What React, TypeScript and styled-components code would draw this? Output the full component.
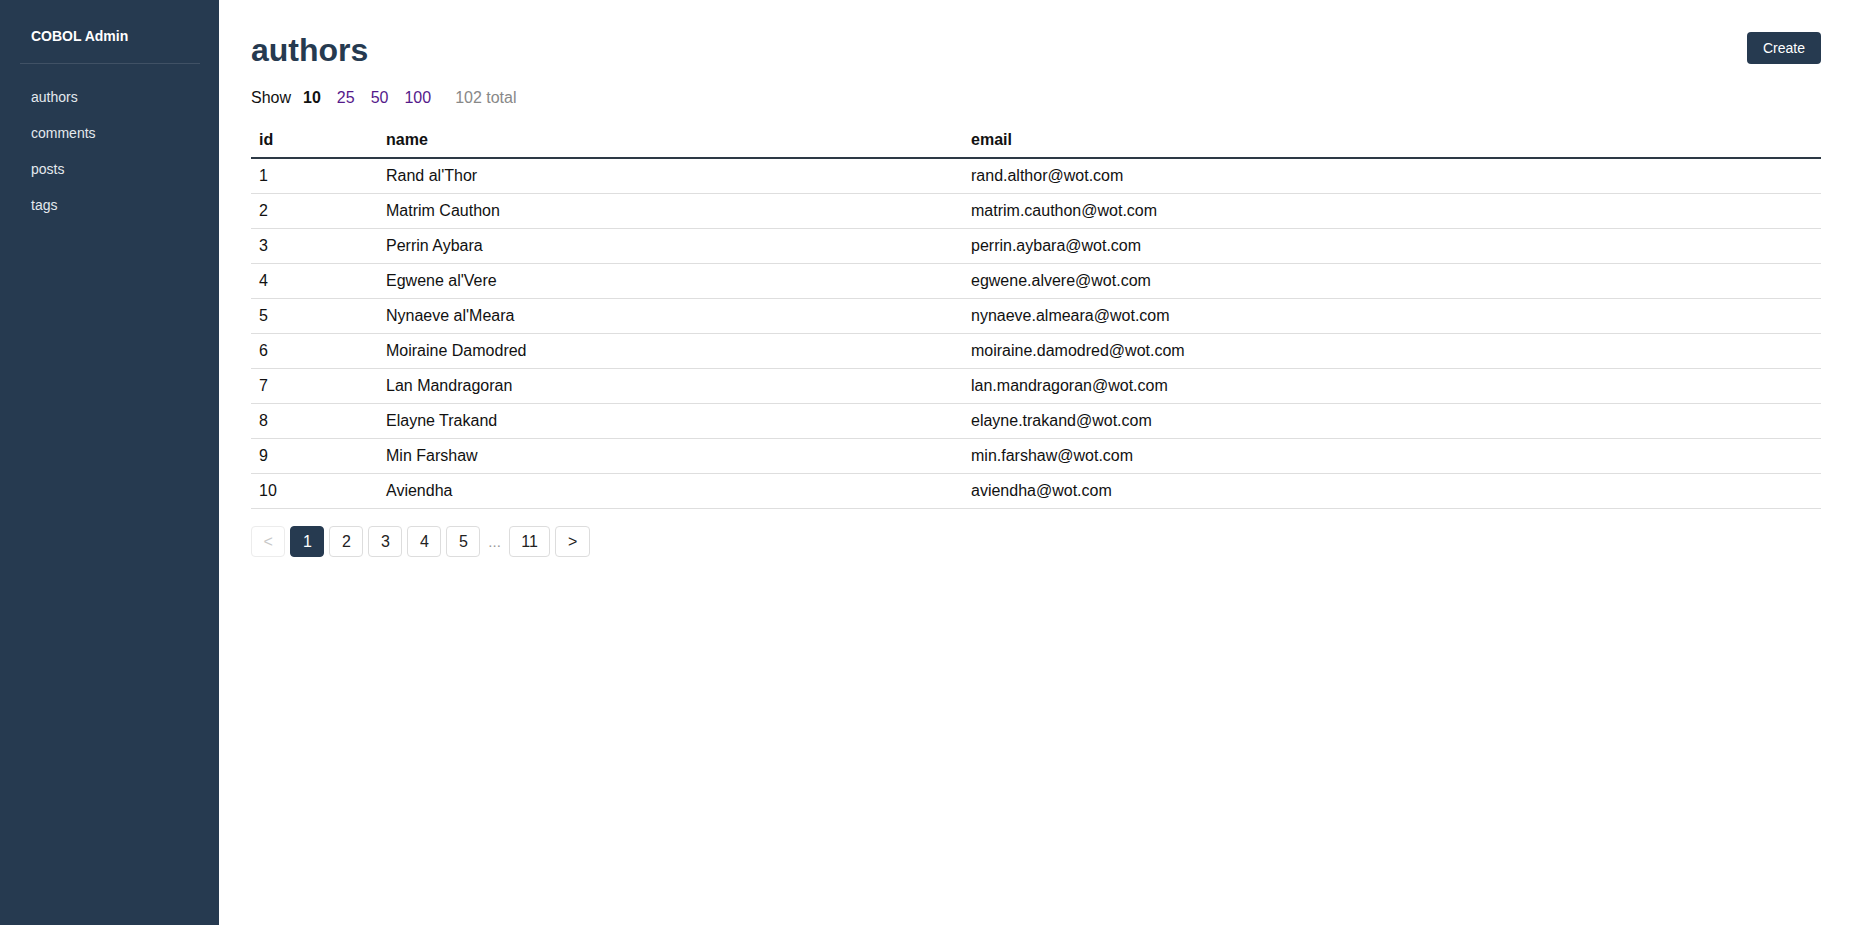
import React from "react";
import styled, { createGlobalStyle } from "styled-components";

const Global = createGlobalStyle`
  html, body { margin: 0; padding: 0; height: 100%; background: #fff; }
  body { font-family: "Liberation Sans", Arial, sans-serif; color: #111; }
  #root { height: 100%; }
  * { box-sizing: border-box; }
`;

const Layout = styled.div`
  display: flex;
  min-height: 100vh;
`;

const Sidebar = styled.aside`
  width: 219px;
  flex: 0 0 219px;
  background: #263a50;
  padding-top: 19px;
`;

const Brand = styled.div`
  margin: 0 19px 0 20px;
  padding: 9px 11px 19px;
  font-size: 14px;
  line-height: 16px;
  font-weight: bold;
  color: #fff;
  border-bottom: 1px solid rgba(255, 255, 255, 0.12);
`;

const Nav = styled.nav`
  display: flex;
  flex-direction: column;
  margin: 15px 19px 0 20px;
`;

const NavItem = styled.a`
  display: block;
  padding: 10px 11px;
  font-size: 14px;
  line-height: 16px;
  color: #e4e9ee;
  text-decoration: none;
`;

const Main = styled.main`
  flex: 1;
  padding: 32px;
  min-width: 0;
`;

const Header = styled.div`
  display: flex;
  justify-content: space-between;
  align-items: flex-start;
  margin-bottom: 20px;
`;

const Title = styled.h1`
  margin: 0;
  font-size: 32px;
  line-height: 37px;
  font-weight: bold;
  color: #263a50;
`;

const CreateButton = styled.button`
  height: 32px;
  padding: 0 16px;
  border: none;
  border-radius: 4px;
  background: #263a50;
  color: #fff;
  font-family: inherit;
  font-size: 14px;
  cursor: pointer;
`;

const ShowRow = styled.div`
  display: flex;
  align-items: baseline;
  font-size: 16px;
  line-height: 18px;
  margin-bottom: 16px;
`;

const ShowLabel = styled.span`
  color: #111;
  margin-right: 12px;
`;

const SizeLinks = styled.div`
  display: flex;
  gap: 16px;
`;

const SizeLink = styled.a<{ $active?: boolean }>`
  color: ${(p) => (p.$active ? "#111" : "#551a8b")};
  font-weight: ${(p) => (p.$active ? "bold" : "normal")};
  text-decoration: none;
`;

const Total = styled.span`
  margin-left: 24px;
  color: #888;
`;

const Table = styled.table`
  width: 100%;
  border-collapse: collapse;
  font-size: 16px;
  line-height: 18px;
`;

const Th = styled.th<{ $w?: string }>`
  text-align: left;
  padding: 8px;
  font-weight: bold;
  color: #111;
  border-bottom: 2px solid #2d3945;
  width: ${(p) => p.$w || "auto"};
`;

const Td = styled.td`
  padding: 8px;
  color: #111;
  border-bottom: 1px solid #dedede;
`;

const Pager = styled.div`
  display: flex;
  align-items: center;
  gap: 5px;
  margin-top: 17px;
`;

const PageButton = styled.button<{ $active?: boolean }>`
  min-width: 34px;
  height: 31px;
  padding: 0 11.5px;
  border-radius: 4px;
  border: 1px solid ${(p) => (p.$active ? "#263a50" : "#ddd")};
  background: ${(p) => (p.$active ? "#263a50" : "#fff")};
  color: ${(p) => (p.$active ? "#fff" : "#222")};
  font-family: inherit;
  font-size: 16px;
  cursor: pointer;
  &:disabled {
    color: #c8c8c8;
    border-color: #ececec;
    cursor: default;
  }
`;

const Ellipsis = styled.span`
  padding: 0 3px;
  color: #999;
  font-size: 15px;
`;

const authors = [
  ["Rand al'Thor", "rand.althor@wot.com"],
  ["Matrim Cauthon", "matrim.cauthon@wot.com"],
  ["Perrin Aybara", "perrin.aybara@wot.com"],
  ["Egwene al'Vere", "egwene.alvere@wot.com"],
  ["Nynaeve al'Meara", "nynaeve.almeara@wot.com"],
  ["Moiraine Damodred", "moiraine.damodred@wot.com"],
  ["Lan Mandragoran", "lan.mandragoran@wot.com"],
  ["Elayne Trakand", "elayne.trakand@wot.com"],
  ["Min Farshaw", "min.farshaw@wot.com"],
  ["Aviendha", "aviendha@wot.com"],
];

export default function App() {
  return (
    <>
      <Global />
      <Layout>
        <Sidebar>
          <Brand>COBOL Admin</Brand>
          <Nav>
            {["authors", "comments", "posts", "tags"].map((n) => (
              <NavItem key={n} href="#">
                {n}
              </NavItem>
            ))}
          </Nav>
        </Sidebar>
        <Main>
          <Header>
            <Title>authors</Title>
            <CreateButton>Create</CreateButton>
          </Header>
          <ShowRow>
            <ShowLabel>Show</ShowLabel>
            <SizeLinks>
              <SizeLink $active>10</SizeLink>
              <SizeLink href="#">25</SizeLink>
              <SizeLink href="#">50</SizeLink>
              <SizeLink href="#">100</SizeLink>
            </SizeLinks>
            <Total>102 total</Total>
          </ShowRow>
          <Table>
            <thead>
              <tr>
                <Th $w="127px">id</Th>
                <Th $w="585px">name</Th>
                <Th>email</Th>
              </tr>
            </thead>
            <tbody>
              {authors.map(([name, email], i) => (
                <tr key={i}>
                  <Td>{i + 1}</Td>
                  <Td>{name}</Td>
                  <Td>{email}</Td>
                </tr>
              ))}
            </tbody>
          </Table>
          <Pager>
            <PageButton disabled>&lt;</PageButton>
            <PageButton $active>1</PageButton>
            <PageButton>2</PageButton>
            <PageButton>3</PageButton>
            <PageButton>4</PageButton>
            <PageButton>5</PageButton>
            <Ellipsis>...</Ellipsis>
            <PageButton>11</PageButton>
            <PageButton>&gt;</PageButton>
          </Pager>
        </Main>
      </Layout>
    </>
  );
}
